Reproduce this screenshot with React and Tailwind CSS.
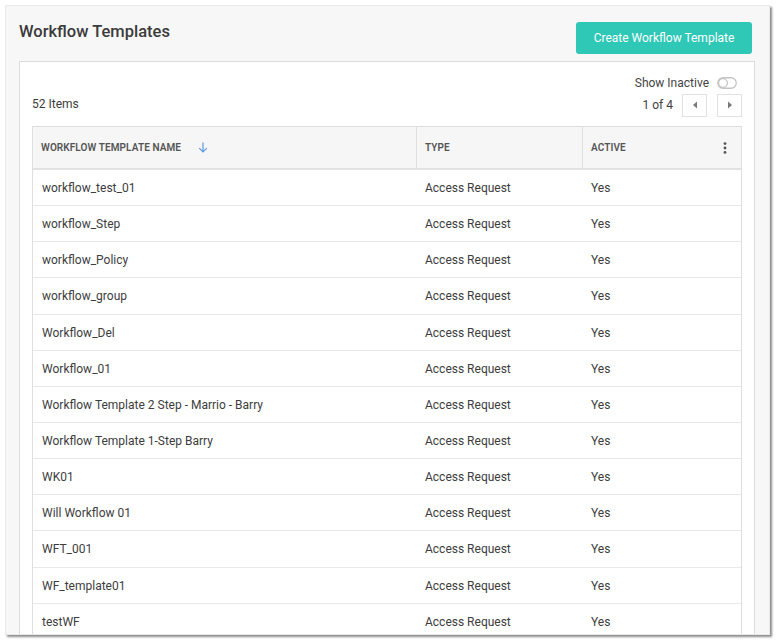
import React from "react";

const rows = [
  "workflow_test_01",
  "workflow_Step",
  "workflow_Policy",
  "workflow_group",
  "Workflow_Del",
  "Workflow_01",
  "Workflow Template 2 Step - Marrio - Barry",
  "Workflow Template 1-Step Barry",
  "WK01",
  "Will Workflow 01",
  "WFT_001",
  "WF_template01",
  "testWF",
];

function Toggle() {
  return (
    <svg width="20" height="12" viewBox="0 0 20 12" className="block">
      <rect x="0.75" y="0.75" width="18.5" height="10.5" rx="5.25" fill="#fff" stroke="#c4c4c4" strokeWidth="1.3" />
      <circle cx="6" cy="6" r="4.4" fill="#fff" stroke="#c4c4c4" strokeWidth="1.3" />
    </svg>
  );
}

function Caret({ dir }) {
  return (
    <svg width="6" height="8" viewBox="0 0 6 8" className="block">
      {dir === "left" ? <path d="M5 0.5 L1 4 L5 7.5 Z" fill="#7a7a7a" /> : <path d="M1 0.5 L5 4 L1 7.5 Z" fill="#7a7a7a" />}
    </svg>
  );
}

export default function App() {
  return (
    <div className="w-[777px] h-[641px] bg-white overflow-hidden" style={{ fontFamily: "Roboto, 'Liberation Sans', sans-serif" }}>
      <div className="ml-[5px] mt-[5px] w-[765px] h-[630px] bg-[#f7f7f7] border border-[#e9e9e9] shadow-[2px_2px_2px_rgba(0,0,0,0.45)] overflow-hidden">
        <div className="flex items-center justify-between pl-[13px] pr-[17px] pt-[16px]">
          <h1 className="text-[16.5px] font-medium text-[#3b3b3b] leading-[20px] -mt-[12px]">Workflow Templates</h1>
          <button className="h-[32px] w-[176px] rounded-[3px] bg-[#2fc7b6] text-white text-[12px] leading-none">
            Create Workflow Template
          </button>
        </div>
        <div className="ml-[13px] mr-[14px] mt-[7px] bg-white border border-[#dcdcdc] h-[600px] px-[12px]">
          <div className="flex items-center justify-end pt-[14px] pr-[5px] h-[28px]">
            <span className="text-[12px] text-[#444] leading-[16px] mr-[8px]">Show Inactive</span>
            <Toggle />
          </div>
          <div className="flex items-center justify-between mt-[3px] h-[24px]">
            <span className="text-[12px] text-[#3d3d3d] -mt-[2px]">52 Items</span>
            <div className="flex items-center">
              <span className="text-[12px] text-[#3d3d3d] mr-[9px]">1 of 4</span>
              <div className="w-[25px] h-[23px] border border-[#e2e2e2] flex items-center justify-center mr-[10px]">
                <Caret dir="left" />
              </div>
              <div className="w-[25px] h-[23px] border border-[#e2e2e2] flex items-center justify-center">
                <Caret dir="right" />
              </div>
            </div>
          </div>
          <div className="mt-[9px] border-l border-r border-t border-[#dedede]">
            <div className="flex h-[43px] bg-[#f6f6f6] border-b-2 border-[#e2e2e2] text-[10px] font-semibold text-[#555] uppercase tracking-[0.1px]">
              <div className="w-[384px] flex items-center pl-[8px] border-r border-[#dedede]">
                <span>Workflow Template Name</span>
                <svg width="10" height="11" viewBox="0 0 10 11" className="ml-[17px]">
                  <path d="M5 0.5 V10 M1.2 6.2 L5 10 L8.8 6.2" fill="none" stroke="#5b9be0" strokeWidth="1.2" />
                </svg>
              </div>
              <div className="w-[166px] flex items-center pl-[8px] border-r border-[#dedede]">Type</div>
              <div className="flex-1 flex items-center justify-between pl-[8px] pr-[14px]">
                <span>Active</span>
                <svg width="4" height="12" viewBox="0 0 4 12">
                  <circle cx="2" cy="1.6" r="1.4" fill="#555" />
                  <circle cx="2" cy="6" r="1.4" fill="#555" />
                  <circle cx="2" cy="10.4" r="1.4" fill="#555" />
                </svg>
              </div>
            </div>
            {rows.map((name) => (
              <div key={name} className="flex h-[36.15px] items-center border-b border-[#e8e8e8] text-[12px] text-[#3d3d3d] pt-[1px]">
                <div className="w-[384px] pl-[9px]">{name}</div>
                <div className="w-[166px] pl-[8px]">Access Request</div>
                <div className="flex-1 pl-[8px]">Yes</div>
              </div>
            ))}
          </div>
        </div>
      </div>
    </div>
  );
}
